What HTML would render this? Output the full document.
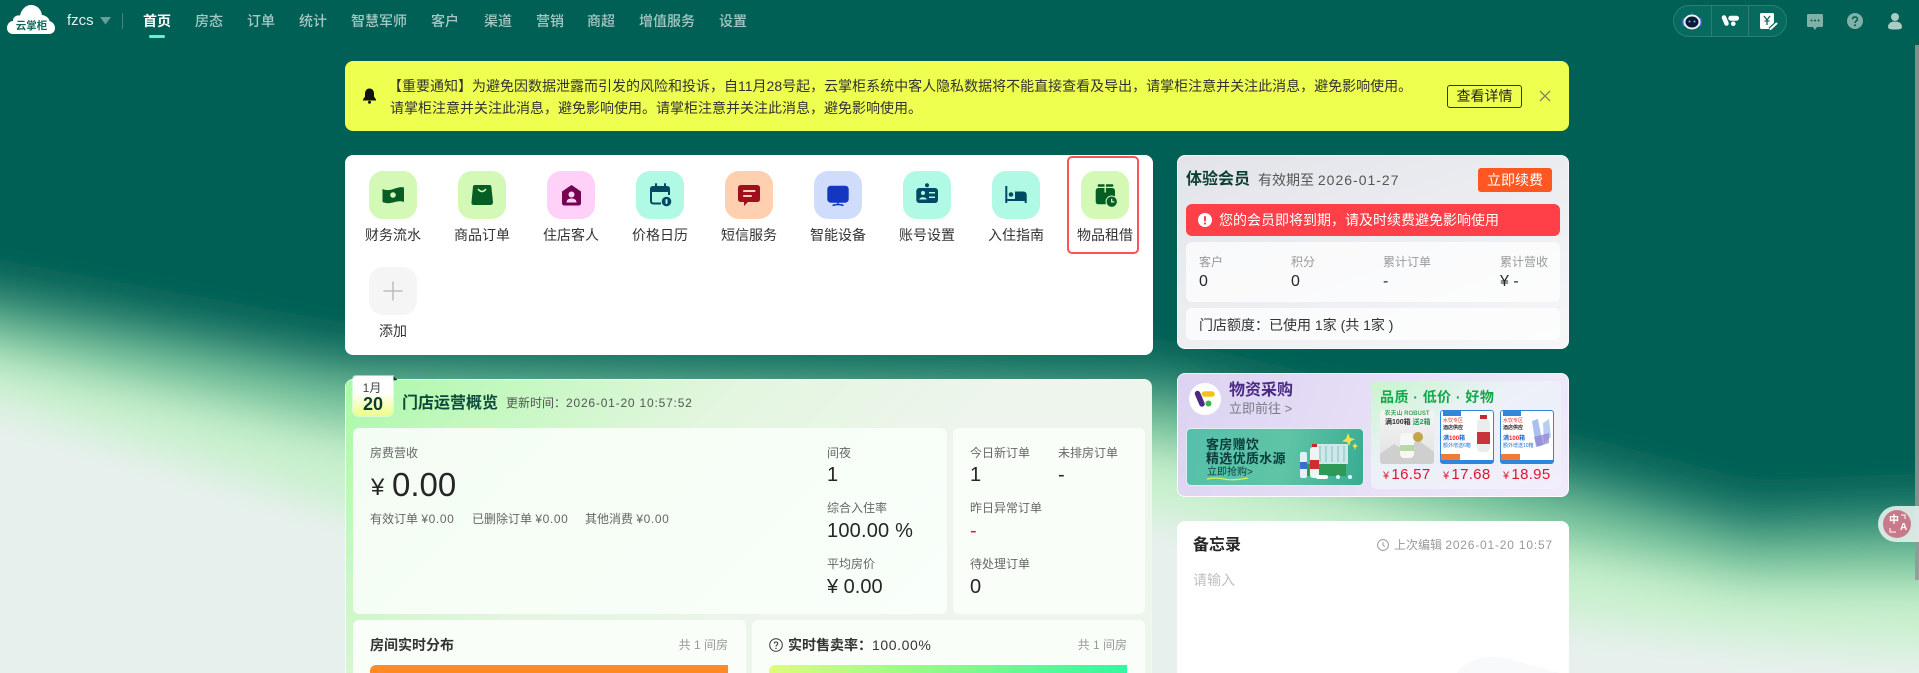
<!DOCTYPE html>
<html lang="zh-CN"><head><meta charset="utf-8"><title>云掌柜</title>
<style>
*{box-sizing:border-box;margin:0;padding:0}
html,body{width:1919px;height:673px;overflow:hidden}
body{position:relative;font-family:"Liberation Sans","Noto Sans CJK SC",sans-serif;color:#333;background:#e8f0ee}
.a{position:absolute}
.t{position:absolute;white-space:nowrap;line-height:20px;height:20px}
.nav{font-size:14px;color:rgba(255,255,255,.65);font-weight:500;top:11px}
.ic{position:absolute;width:48px;height:48px;border-radius:14px}
.ic svg{display:block}
.lb{position:absolute;width:80px;text-align:center;font-size:14px;line-height:20px;color:#333;white-space:nowrap}
.card{position:absolute;border-radius:8px}
.pan{position:absolute;background:#f9fef9;border-radius:6px}
.g12{font-size:12px;color:#666}
.v20{font-size:20px;color:#262626}
.prod{position:absolute;top:410px;width:54px;height:54px;border-radius:3px;overflow:hidden;background:#fff}
.price{position:absolute;top:465px;font-size:15px;line-height:20px;color:#e2122f;font-weight:500;white-space:nowrap;letter-spacing:.3px}
.price small{font-size:11px;margin-right:2px}
.n{letter-spacing:.8px}
.n4{letter-spacing:.6px}
</style></head><body>

<!-- page background -->
<svg class="a" style="left:0;top:0" width="1919" height="673" viewBox="0 0 1919 673">
<defs><filter id="b" x="-10%" y="-30%" width="120%" height="160%"><feGaussianBlur stdDeviation="20"/></filter></defs>
<rect width="1919" height="673" fill="#e8f0ee"/>
<g filter="url(#b)">
<path d="M-150 -150H2070V650L1919 650 1750 640 1570 620 1160 515 345 510 0 405 -150 370Z" fill="#c8f0cd"/>
<path d="M-150 -150H2070V585L1919 585 1750 585 1570 550 1160 450 345 435 0 357 -150 320Z" fill="#7cc8a0"/>
<path d="M-150 -150H2070V540L1919 540 1750 545 1570 500 1160 405 345 385 0 322 -150 290Z" fill="#2c8c78"/>
<path d="M-150 -150H2070V500L1919 500 1750 507 1570 460 1160 365 345 350 0 287 -150 255Z" fill="#006054"/>
</g>
</svg>

<!-- top nav -->
<svg class="a" style="left:6px;top:4px" width="50" height="32" viewBox="0 0 50 32"><path d="M7 30C3 30 1 27 1 24 1 20 4 17 7 17 7 13 10 11 14 11.500 15.500 5 20 1 25 1 31 1 35 5 36 11 40 11.500 43 14 43.500 17 47 18 49 21 49 24 49 28 46 30 43 30Z" fill="#fff"/><text x="25.500" y="25" font-size="10.500" font-weight="700" fill="#0f6a5c" text-anchor="middle" font-family="Liberation Sans,Noto Sans CJK SC,sans-serif">云掌柜</text></svg>
<div class="t" style="left:67px;top:11px;font-size:15px;color:#e4efec">fzcs</div>
<svg class="a" style="left:100px;top:17px" width="12" height="8"><path d="M0 0H11L5.500 7.500Z" fill="rgba(255,255,255,.4)"/></svg>
<div class="a" style="left:122px;top:13px;width:1px;height:16px;background:rgba(255,255,255,.25)"></div>
<div class="t nav" style="left:143px;color:#fff;font-weight:700">首页</div>
<div class="a" style="left:149px;top:35px;width:16px;height:3px;background:#5cf5cf;border-radius:2px"></div>
<div class="t nav" style="left:195px">房态</div>
<div class="t nav" style="left:247px">订单</div>
<div class="t nav" style="left:299px">统计</div>
<div class="t nav" style="left:351px">智慧军师</div>
<div class="t nav" style="left:431px">客户</div>
<div class="t nav" style="left:484px">渠道</div>
<div class="t nav" style="left:536px">营销</div>
<div class="t nav" style="left:587px">商超</div>
<div class="t nav" style="left:639px">增值服务</div>
<div class="t nav" style="left:719px">设置</div>

<div class="a" style="left:1673px;top:5px;width:114px;height:32px;border-radius:16px;background:#066b5e;border:1px solid #2c7e70"></div>
<div class="a" style="left:1711px;top:6px;width:1px;height:30px;background:#2c7e70"></div>
<div class="a" style="left:1748px;top:6px;width:1px;height:30px;background:#2c7e70"></div>
<svg class="a" style="left:1680px;top:9px" width="24" height="24" viewBox="0 0 24 24"><rect x="11.500" y="3" width="1" height="3" fill="#4a5cd8"/><rect x="2.500" y="9" width="4" height="8" rx="2" fill="#5a6cf0"/><rect x="17.500" y="9" width="4" height="8" rx="2" fill="#5a6cf0"/><ellipse cx="12" cy="13" rx="8.500" ry="7.500" fill="#e8edf8"/><ellipse cx="12" cy="13" rx="6.500" ry="5.500" fill="#0b1a33"/><circle cx="9.500" cy="12.500" r="1" fill="#35d6e0"/><circle cx="14.500" cy="12.500" r="1" fill="#35d6e0"/></svg>
<svg class="a" style="left:1720px;top:12px" width="22" height="16" viewBox="0 0 22 16"><path d="M4 5.500L6.500 11.500" stroke="#fff" stroke-width="4.500" stroke-linecap="round"/><path d="M10.800 6.200H16.500" stroke="#fff" stroke-width="5" stroke-linecap="round"/><circle cx="13.300" cy="11.700" r="2.300" fill="#fff"/></svg>
<svg class="a" style="left:1759px;top:12px" width="20" height="19" viewBox="0 0 20 19"><rect x="1" y="1" width="14" height="16" rx="1.500" fill="#fff"/><path d="M5 4L8 8 11 4M8 8V13M5.500 9H10.500" stroke="#0f6a5c" stroke-width="1.300" fill="none"/><path d="M11 17.500L17.500 11.500" stroke="#076b5d" stroke-width="4.500"/><path d="M11.500 17L17.500 11.500" stroke="#fff" stroke-width="2" stroke-linecap="round"/></svg>
<svg class="a" style="left:1807px;top:14px" width="16" height="17" viewBox="0 0 16 17"><path d="M1.500 0H14.500Q16 0 16 1.500V11.500Q16 13 14.500 13H10L8 16 6 13H1.500Q0 13 0 11.500V1.500Q0 0 1.500 0Z" fill="#7fb1a8"/><circle cx="4.500" cy="6.500" r="1" fill="#06594d"/><circle cx="8" cy="6.500" r="1" fill="#06594d"/><circle cx="11.500" cy="6.500" r="1" fill="#06594d"/></svg>
<svg class="a" style="left:1847px;top:13px" width="16" height="16" viewBox="0 0 16 16"><circle cx="8" cy="8" r="8" fill="#7fb1a8"/><path d="M5.500 6.200C5.500 3.200 10.500 3.200 10.500 6.200 10.500 8 8 8 8 10" stroke="#06594d" stroke-width="1.500" fill="none"/><circle cx="8" cy="12.300" r="1" fill="#06594d"/></svg>
<svg class="a" style="left:1888px;top:12px" width="14" height="18" viewBox="0 0 14 18"><circle cx="7" cy="5" r="4" fill="#a9ccc5"/><path d="M0 15C0 11 3.500 9.500 7 9.500 10.500 9.500 14 11 14 15 14 17 12 17.500 7 17.500 2 17.500 0 17 0 15Z" fill="#a9ccc5"/></svg>

<!-- notice -->
<div class="card" style="left:345px;top:61px;width:1224px;height:70px;background:#eeff4f"></div>
<svg class="a" style="left:362px;top:88px" width="15" height="16" viewBox="0 0 15 16"><path d="M7.500 0.500C4.500 0.500 3 3 3 5.500V8.500L1 11.500V12.500H14V11.500L12 8.500V5.500C12 3 10.500 0.500 7.500 0.500Z" fill="#111"/><circle cx="7.500" cy="14.300" r="1.500" fill="#111"/></svg>
<div class="t" style="left:388px;top:76px;font-size:14px;color:#333">【重要通知】为避免因数据泄露而引发的风险和投诉&#65292;自11月28号起&#65292;云掌柜系统中客人隐私数据将不能直接查看及导出&#65292;请掌柜注意并关注此消息&#65292;避免影响使用。</div>
<div class="t" style="left:390px;top:98px;font-size:14px;color:#333">请掌柜注意并关注此消息&#65292;避免影响使用。请掌柜注意并关注此消息&#65292;避免影响使用。</div>
<div class="a" style="left:1447px;top:85px;width:75px;height:23px;border:1px solid #333;border-radius:3px;font-size:14px;line-height:21px;text-align:center;color:#222">查看详情</div>
<svg class="a" style="left:1539px;top:90px" width="12" height="12"><path d="M1 1L11 11M11 1L1 11" stroke="#7c8a60" stroke-width="1.300"/></svg>

<!-- quick actions -->
<div class="card" style="left:345px;top:155px;width:808px;height:200px;background:#fff"></div>
<div class="a" style="left:1067px;top:156px;width:72px;height:98px;border:2px solid #ff5252;border-radius:5px"></div>

<div class="ic" style="left:369px;top:171px;background:#d4f9b6"><svg width="48" height="48"><path d="M13.500 18C18 20 22 19 26 17.500 29 16.500 32 15.500 35 16.500V31C31 29.500 28 30.500 24 31.500 20 32.500 17 32.500 13.500 31Z" fill="#075e24"/><circle cx="24" cy="24" r="2.800" fill="#d4f9b6"/></svg></div>
<div class="lb" style="left:353px;top:225px">财务流水</div>
<div class="ic" style="left:458px;top:171px;background:#d4f9b6"><svg width="48" height="48"><path d="M16.500 14H31.500Q33 14 33.300 15.500L35 31Q35 34 32 34H16Q13 34 13.500 31L15 15.500Q15.300 14 16.500 14Z" fill="#075e24"/><path d="M20 18Q24 23 28 18" stroke="#d4f9b6" stroke-width="1.600" fill="none"/></svg></div>
<div class="lb" style="left:442px;top:225px">商品订单</div>
<div class="ic" style="left:547px;top:171px;background:#ffd0f8"><svg width="48" height="48"><path d="M24.500 14L34 20.500V32Q34 34.500 31.500 34.500H17.500Q15 34.500 15 32V20.500Z" fill="#75034f"/><circle cx="24.500" cy="23.500" r="3" fill="#ffd0f8"/><path d="M19.500 31.500C19.500 28.500 22 27.500 24.500 27.500 27 27.500 29.500 28.500 29.500 31.500Z" fill="#ffd0f8"/></svg></div>
<div class="lb" style="left:531px;top:225px">住店客人</div>
<div class="ic" style="left:636px;top:171px;background:#b0f9e4"><svg width="48" height="48"><path d="M14 21V18Q14 15 17 15H31Q34 15 34 18V21Z" fill="#004a63"/><path d="M15 20V30Q15 32.500 17.500 32.500H25M33 20V24" stroke="#004a63" stroke-width="2" fill="none"/><rect x="19" y="12.300" width="2" height="4" fill="#004a63"/><rect x="28" y="12.300" width="2" height="4" fill="#004a63"/><circle cx="30.500" cy="30.500" r="4.800" fill="#004a63"/><rect x="29.500" y="28" width="2" height="5" rx="1" fill="#b0f9e4"/></svg></div>
<div class="lb" style="left:620px;top:225px">价格日历</div>
<div class="ic" style="left:725px;top:171px;background:#ffd0b0"><svg width="48" height="48"><path d="M16 14H32Q35 14 35 17V28Q35 31 32 31H23L19 35V31H16Q13 31 13 28V17Q13 14 16 14Z" fill="#a00f1b"/><rect x="18" y="19" width="12.500" height="2" rx="1" fill="#ffd0b0"/><rect x="18" y="24" width="9" height="2" rx="1" fill="#ffd0b0"/></svg></div>
<div class="lb" style="left:709px;top:225px">短信服务</div>
<div class="ic" style="left:814px;top:171px;background:#cfdcfc"><svg width="48" height="48"><rect x="13.300" y="14.700" width="21.400" height="17" rx="3.500" fill="#1437c0"/><path d="M24 31V33.500M18.500 34.500Q24 32.500 29.500 34.500" stroke="#1437c0" stroke-width="1.500" fill="none"/></svg></div>
<div class="lb" style="left:798px;top:225px">智能设备</div>
<div class="ic" style="left:903px;top:171px;background:#b0f9e4"><svg width="48" height="48"><rect x="13.300" y="17" width="21.700" height="15" rx="3" fill="#004a63"/><circle cx="24" cy="14.300" r="2" fill="#004a63"/><circle cx="20" cy="22" r="2" fill="#b0f9e4"/><path d="M16.300 28.500C16.300 25.500 23.700 25.500 23.700 28.500Z" fill="#b0f9e4"/><rect x="26" y="21" width="6" height="1.500" fill="#b0f9e4"/><rect x="26" y="25.500" width="6" height="1.500" fill="#b0f9e4"/></svg></div>
<div class="lb" style="left:887px;top:225px">账号设置</div>
<div class="ic" style="left:992px;top:171px;background:#b0f9e4"><svg width="48" height="48"><rect x="13.300" y="15" width="2" height="17" fill="#004a63"/><path d="M13.300 28H34.700V32H32.700V30H13.300Z" fill="#004a63"/><circle cx="19" cy="23.500" r="2.300" fill="#004a63"/><path d="M23 20.500H31Q34.700 20.500 34.700 24V28H23Z" fill="#004a63"/></svg></div>
<div class="lb" style="left:976px;top:225px">入住指南</div>
<div class="ic" style="left:1081px;top:171px;background:#d4f9b6"><svg width="48" height="48"><rect x="16.700" y="13.300" width="15.600" height="2.400" rx="1" fill="#075e24"/><path d="M17.500 17H31Q34 17 34 20V30.500Q34 33.300 31 33.300H17.500Q14.700 33.300 14.700 30.500V20Q14.700 17 17.500 17Z" fill="#075e24"/><rect x="23.500" y="13" width="1.400" height="8.500" fill="#d4f9b6"/><circle cx="30.700" cy="30.700" r="6.200" fill="#d4f9b6"/><circle cx="30.700" cy="30.700" r="5.200" fill="#075e24"/><path d="M30.700 27.800V30.900H33.300" stroke="#d4f9b6" stroke-width="1.300" fill="none"/></svg></div>
<div class="lb" style="left:1065px;top:225px">物品租借</div>
<div class="ic" style="left:369px;top:267px;background:#f5f5f5"><svg width="48" height="48"><path d="M24 14.500V33.500M14.500 24H33.500" stroke="#bdbdbd" stroke-width="1.500"/></svg></div>
<div class="lb" style="left:353px;top:321px">添加</div>

<!-- overview card -->
<div class="card" style="left:345px;top:379px;width:807px;height:294px;border-radius:8px 8px 0 0;background:linear-gradient(135deg,#aaf9a8 0,#bff8bb 12%,#e3f6df 36%,#edf5ec 60%,#eef5ec 100%);border:1px solid rgba(255,255,255,.6);border-bottom:0"></div>
<svg class="a" style="left:392px;top:376px" width="6" height="6"><path d="M1 0L5.500 4 1 4.500Z" fill="#0d3a30"/></svg>
<div class="a" style="left:353px;top:376px;width:40px;height:40px;background:linear-gradient(180deg,#fff 0,#fff 40%,#eefd86 100%);border-radius:3px 0 6px 6px;box-shadow:0 0 0 1px rgba(255,255,255,.5)"></div>
<div class="t" style="left:353px;top:378px;width:38px;text-align:center;font-size:12px;color:#444">1月</div>
<div class="t" style="left:353px;top:394px;width:40px;text-align:center;font-size:18px;font-weight:700;color:#0a3d2e">20</div>
<div class="t" style="left:402px;top:394px;font-size:16px;font-weight:700;color:#0d4a38">门店运营概览</div>
<div class="t" style="left:506px;top:393px;font-size:12px;color:#555">更新时间&#65306;<span class="n">2026-01-20 10:57:52</span></div>

<div class="pan" style="left:353px;top:428px;width:594px;height:186px;background:linear-gradient(135deg,#f4fdf3,#f9fffa)"></div>
<div class="pan" style="left:953px;top:428px;width:192px;height:186px"></div>
<div class="t g12" style="left:370px;top:443px">房费营收</div>
<div class="t" style="left:371px;top:478px;font-size:24px;color:#262626">¥</div>
<div class="t" style="left:392px;top:475px;font-size:33px;color:#262626">0.00</div>
<div class="t g12" style="left:370px;top:509px">有效订单 <span class="n4">¥0.00</span></div>
<div class="t g12" style="left:472px;top:509px">已删除订单 <span class="n4">¥0.00</span></div>
<div class="t g12" style="left:585px;top:509px">其他消费 <span class="n4">¥0.00</span></div>

<div class="t g12" style="left:827px;top:443px">间夜</div>
<div class="t v20" style="left:827px;top:465px">1</div>
<div class="t g12" style="left:827px;top:498px">综合入住率</div>
<div class="t v20" style="left:827px;top:521px;letter-spacing:.2px">100.00 %</div>
<div class="t g12" style="left:827px;top:554px">平均房价</div>
<div class="t v20" style="left:827px;top:577px">¥ 0.00</div>

<div class="t g12" style="left:970px;top:443px">今日新订单</div>
<div class="t g12" style="left:1058px;top:443px">未排房订单</div>
<div class="t v20" style="left:970px;top:465px">1</div>
<div class="t v20" style="left:1058px;top:465px">-</div>
<div class="t g12" style="left:970px;top:498px">昨日异常订单</div>
<div class="t v20" style="left:970px;top:521px;color:#f5143c">-</div>
<div class="t g12" style="left:970px;top:554px">待处理订单</div>
<div class="t v20" style="left:970px;top:577px">0</div>

<div class="pan" style="left:353px;top:620px;width:393px;height:53px;border-radius:6px 6px 0 0"></div>
<div class="t" style="left:370px;top:635px;font-size:14px;font-weight:700;color:#333">房间实时分布</div>
<div class="t" style="right:1191px;top:635px;font-size:12px;color:#999">共 1 间房</div>
<div class="a" style="left:370px;top:665px;width:358px;height:8px;background:#ff8a26;border-radius:6px 0 0 0"></div>

<div class="pan" style="left:752px;top:620px;width:393px;height:53px;border-radius:6px 6px 0 0"></div>
<svg class="a" style="left:769px;top:638px" width="14" height="14" viewBox="0 0 14 14"><circle cx="7" cy="7" r="6.300" fill="none" stroke="#333" stroke-width="1"/><path d="M5.200 5.500C5.200 3.500 8.800 3.500 8.800 5.500 8.800 7 7 7 7 8.500" stroke="#333" fill="none"/><circle cx="7" cy="10.300" r=".7" fill="#333"/></svg>
<div class="t" style="left:788px;top:635px;font-size:14px;font-weight:700;color:#333">实时售卖率&#65306;<span style="font-weight:500;letter-spacing:.6px">100.00%</span></div>
<div class="t" style="right:792px;top:635px;font-size:12px;color:#999">共 1 间房</div>
<div class="a" style="left:769px;top:665px;width:358px;height:8px;background:linear-gradient(90deg,#dffc78,#30f8a0);border-radius:6px 0 0 0"></div>

<!-- member -->
<div class="card" style="left:1177px;top:155px;width:392px;height:194px;background:linear-gradient(160deg,#e2e4ea,#f6f7f9);border:1px solid rgba(255,255,255,.8)"></div>
<div class="t" style="left:1186px;top:170px;font-size:16px;font-weight:700;color:#0e3f32">体验会员</div>
<div class="t" style="left:1258px;top:170px;font-size:14px;color:#555">有效期至 <span style="letter-spacing:1px">2026-01-27</span></div>
<div class="a" style="left:1478px;top:168px;width:74px;height:24px;background:#ff5722;border-radius:3px;color:#fff;font-size:14px;line-height:24px;text-align:center">立即续费</div>
<div class="a" style="left:1186px;top:204px;width:374px;height:32px;background:#ff4048;border-radius:6px"></div>
<svg class="a" style="left:1198px;top:213px" width="14" height="14"><circle cx="7" cy="7" r="7" fill="#fff"/><rect x="6" y="3" width="2" height="5.500" rx="1" fill="#ff4048"/><circle cx="7" cy="10.500" r="1.100" fill="#ff4048"/></svg>
<div class="t" style="left:1219px;top:210px;font-size:14px;color:#fff">您的会员即将到期&#65292;请及时续费避免影响使用</div>
<div class="a" style="left:1186px;top:242px;width:374px;height:60px;background:rgba(255,255,255,.72);border-radius:6px"></div>
<div class="t" style="left:1199px;top:252px;font-size:12px;color:#999">客户</div>
<div class="t" style="left:1291px;top:252px;font-size:12px;color:#999">积分</div>
<div class="t" style="left:1383px;top:252px;font-size:12px;color:#999">累计订单</div>
<div class="t" style="left:1500px;top:252px;font-size:12px;color:#999">累计营收</div>
<div class="t" style="left:1199px;top:272px;font-size:16px;color:#262626">0</div>
<div class="t" style="left:1291px;top:272px;font-size:16px;color:#262626">0</div>
<div class="t" style="left:1383px;top:272px;font-size:16px;color:#262626">-</div>
<div class="t" style="left:1500px;top:272px;font-size:16px;color:#262626">¥ -</div>
<div class="a" style="left:1186px;top:308px;width:374px;height:32px;background:rgba(255,255,255,.72);border-radius:6px"></div>
<div class="t" style="left:1199px;top:315px;font-size:14px;color:#333">门店额度&#65306;已使用 1家 (共 1家 )</div>

<!-- banner -->
<div class="card" style="left:1177px;top:373px;width:392px;height:124px;background:linear-gradient(110deg,#dcd3f2,#e6def6 45%,#f0ebfb);border:1px solid rgba(255,255,255,.85)"></div>
<div class="a" style="left:1189px;top:383px;width:32px;height:32px;border-radius:50%;background:#fff"></div>
<svg class="a" style="left:1189px;top:383px" width="32" height="32"><path d="M8.500 10.500L13 21" stroke="#4b2a85" stroke-width="5.500" stroke-linecap="round"/><path d="M15.500 11H23" stroke="#f5c21b" stroke-width="5.500" stroke-linecap="round"/><circle cx="19.500" cy="20.500" r="3" fill="#3bb54a"/></svg>
<div class="t" style="left:1229px;top:381px;font-size:16px;font-weight:700;color:#4b2a85">物资采购</div>
<div class="t" style="left:1229px;top:399px;font-size:13px;color:#7a7a86">立即前往 &gt;</div>

<div class="a" style="left:1186px;top:428px;width:178px;height:58px;border-radius:5px;background:linear-gradient(100deg,#55c0aa,#5fc4a6 55%,#39ab92);border:1px solid rgba(255,255,255,.8);overflow:hidden"></div>
<div class="t" style="left:1206px;top:435px;font-size:13px;font-weight:700;color:#0a3b3a;letter-spacing:.3px">客房赠饮</div>
<div class="t" style="left:1206px;top:449px;font-size:13px;font-weight:700;color:#0a3b3a;letter-spacing:.3px">精选优质水源</div>
<div class="t" style="left:1207px;top:463px;font-size:10px;color:#0a3b3a">立即抢购&gt;</div>
<svg class="a" style="left:1206px;top:476px" width="44" height="5"><path d="M1 3Q10 1 18 3T42 2" stroke="#d8f257" stroke-width="1.200" fill="none"/></svg>
<svg class="a" style="left:1296px;top:440px" width="56" height="40" viewBox="0 0 56 40"><path d="M20 4H52V24H20Z" fill="#cfe7e8"/><path d="M24 6V22M30 6V22M36 6V22M42 6V22M48 6V22" stroke="#a9d4d6" stroke-width="2"/><path d="M4 24H50V36H4Z" fill="#2f9a58"/><rect x="4" y="12" width="7" height="26" rx="2" fill="#e4f1fa"/><rect x="4" y="22" width="7" height="7" fill="#3a71c8"/><rect x="14" y="7" width="9" height="31" rx="3" fill="#eef4f4"/><rect x="14" y="20" width="9" height="9" fill="#d42b33"/><rect x="16" y="4" width="5" height="3" fill="#c9272f"/></svg>
<div class="a" style="left:1316px;top:475px;width:12px;height:4px;border-radius:2px;background:#fff"></div>
<div class="a" style="left:1336px;top:475px;width:4px;height:4px;border-radius:50%;background:#dff"></div>
<div class="a" style="left:1348px;top:475px;width:4px;height:4px;border-radius:50%;background:#dff"></div>
<svg class="a" style="left:1341px;top:432px" width="20" height="20"><path d="M7 1L9 6 14 7 9.500 9.500 8.500 14 6 10 1 9.500 5 6.500Z" fill="#f0e050"/><path d="M14 11L15 13 17 14 15 15 14 18 13 15 11 14 13 13Z" fill="#f0e050"/></svg>

<div class="a" style="left:1371px;top:381px;width:190px;height:108px;border-radius:6px;background:linear-gradient(150deg,#c8f5cc,#ecf1f8 40%,#f2eefb)"></div>
<div class="t" style="left:1380px;top:387px;font-size:14px;font-weight:700;color:#12a84a;letter-spacing:.45px">品质 · 低价 · 好物</div>

<div class="prod" style="left:1380px;background:linear-gradient(#f5f5f5,#e0e0e0)">
 <div class="a" style="left:0;top:0;width:54px;text-align:center;font-size:6px;line-height:8px;color:#3aa85c;font-weight:700;white-space:nowrap">农夫山 ROBUST</div>
 <div class="a" style="left:5px;top:7px;font-size:7px;line-height:11px;color:#333;white-space:nowrap;font-weight:700">满100箱 <span style="color:#17a05a">送2箱</span></div>
 <svg class="a" style="left:0;top:20px" width="54" height="34"><path d="M0 24L14 14 24 20 38 10 54 22V34H0Z" fill="#cfcfcf"/><rect x="20" y="3" width="14" height="25" rx="4" fill="#f6f8f6"/><rect x="20" y="15" width="14" height="6" fill="#b9d8a8"/><circle cx="38" cy="7" r="5" fill="#c4a44a"/></svg>
</div>
<div class="prod" style="left:1440px;border:1px solid #2f86dc;border-bottom:4px solid #2f86dc">
 <div class="a" style="left:2px;top:0;width:18px;height:5px;background:#2f86dc"></div>
 <div class="a" style="left:2px;top:7px;font-size:5px;line-height:6px;color:#d32;white-space:nowrap">水饮专区</div>
 <div class="a" style="left:2px;top:14px;font-size:5px;line-height:6px;color:#222;white-space:nowrap;font-weight:700">酒店供应</div>
 <div class="a" style="left:2px;top:24px;font-size:6px;line-height:8px;color:#1f6fd0;white-space:nowrap;font-weight:700">满<span style="color:#e22">100</span>箱</div>
 <div class="a" style="left:2px;top:32px;font-size:5px;line-height:7px;color:#1f6fd0;white-space:nowrap">额外增送6箱</div>
 <svg class="a" style="left:33px;top:3px" width="18" height="38"><rect x="3" y="5" width="13" height="33" rx="4" fill="#e8eeee"/><rect x="3" y="18" width="13" height="12" fill="#c9343a"/><rect x="6" y="1" width="7" height="4" fill="#c9272f"/></svg>
 <div class="a" style="left:-1px;top:43px;width:20px;height:8px;background:#f27a35"></div>
</div>
<div class="prod" style="left:1500px;border:1px solid #2f86dc;border-bottom:4px solid #2f86dc">
 <div class="a" style="left:2px;top:0;width:18px;height:5px;background:#2f86dc"></div>
 <div class="a" style="left:2px;top:7px;font-size:5px;line-height:6px;color:#d32;white-space:nowrap">水饮专区</div>
 <div class="a" style="left:2px;top:14px;font-size:5px;line-height:6px;color:#222;white-space:nowrap;font-weight:700">酒店供应</div>
 <div class="a" style="left:2px;top:24px;font-size:6px;line-height:8px;color:#1f6fd0;white-space:nowrap;font-weight:700">满<span style="color:#e22">100</span>箱</div>
 <div class="a" style="left:2px;top:32px;font-size:5px;line-height:7px;color:#1f6fd0;white-space:nowrap">额外增送10箱</div>
 <svg class="a" style="left:28px;top:6px" width="24" height="32"><path d="M3 4L9 2 14 28 7 30Z" fill="#a9c0ee"/><path d="M14 6L20 2 22 20 15 26Z" fill="#b9cdf2"/><path d="M5 20L20 16 20 26 8 30Z" fill="#8d80d0" opacity=".7"/></svg>
 <div class="a" style="left:-1px;top:43px;width:20px;height:8px;background:#f27a35"></div>
</div>
<div class="price" style="left:1383px"><small>¥</small>16.57</div>
<div class="price" style="left:1443px"><small>¥</small>17.68</div>
<div class="price" style="left:1503px"><small>¥</small>18.95</div>

<!-- memo -->
<div class="card" style="left:1177px;top:521px;width:392px;height:152px;border-radius:8px 8px 0 0;background:#fff;overflow:hidden">
 <svg class="a" style="left:280px;top:136px" width="112" height="16"><path d="M0 16C8 4 22 0 38 0 48 0 80 10 103 16Z" fill="#f8f9fa"/></svg>
</div>
<div class="t" style="left:1193px;top:536px;font-size:16px;font-weight:700;color:#262626">备忘录</div>
<svg class="a" style="left:1377px;top:539px" width="12" height="12"><circle cx="6" cy="6" r="5.400" fill="none" stroke="#999"/><path d="M6 3V6.300L8 7.500" stroke="#999" fill="none"/></svg>
<div class="t" style="left:1394px;top:535px;font-size:12px;color:#999">上次编辑 <span class="n">2026-01-20 10:57</span></div>
<div class="t" style="left:1193px;top:570px;font-size:14px;color:#c0c0c0">请输入</div>

<!-- scrollbar and translate widget -->
<div class="a" style="left:1915px;top:45px;width:4px;height:535px;background:rgba(150,150,150,.85)"></div>
<div class="a" style="left:1878px;top:506px;width:41px;height:36px;background:rgba(226,238,234,.92);border-radius:18px 0 0 18px"></div>
<div class="a" style="left:1883px;top:510px;width:28px;height:28px;border-radius:50%;background:#c97a8a"></div>
<div class="t" style="left:1889px;top:514px;height:14px;font-size:10px;color:#fff;font-weight:700;line-height:14px">中</div>
<div class="t" style="left:1900px;top:521px;height:14px;font-size:10px;color:#fff;font-weight:700;line-height:14px">A</div>
<svg class="a" style="left:1883px;top:510px" width="28" height="28"><path d="M18 5H22V9M7 18V22H13" stroke="#fff" stroke-width="1" fill="none"/></svg>
</body></html>
